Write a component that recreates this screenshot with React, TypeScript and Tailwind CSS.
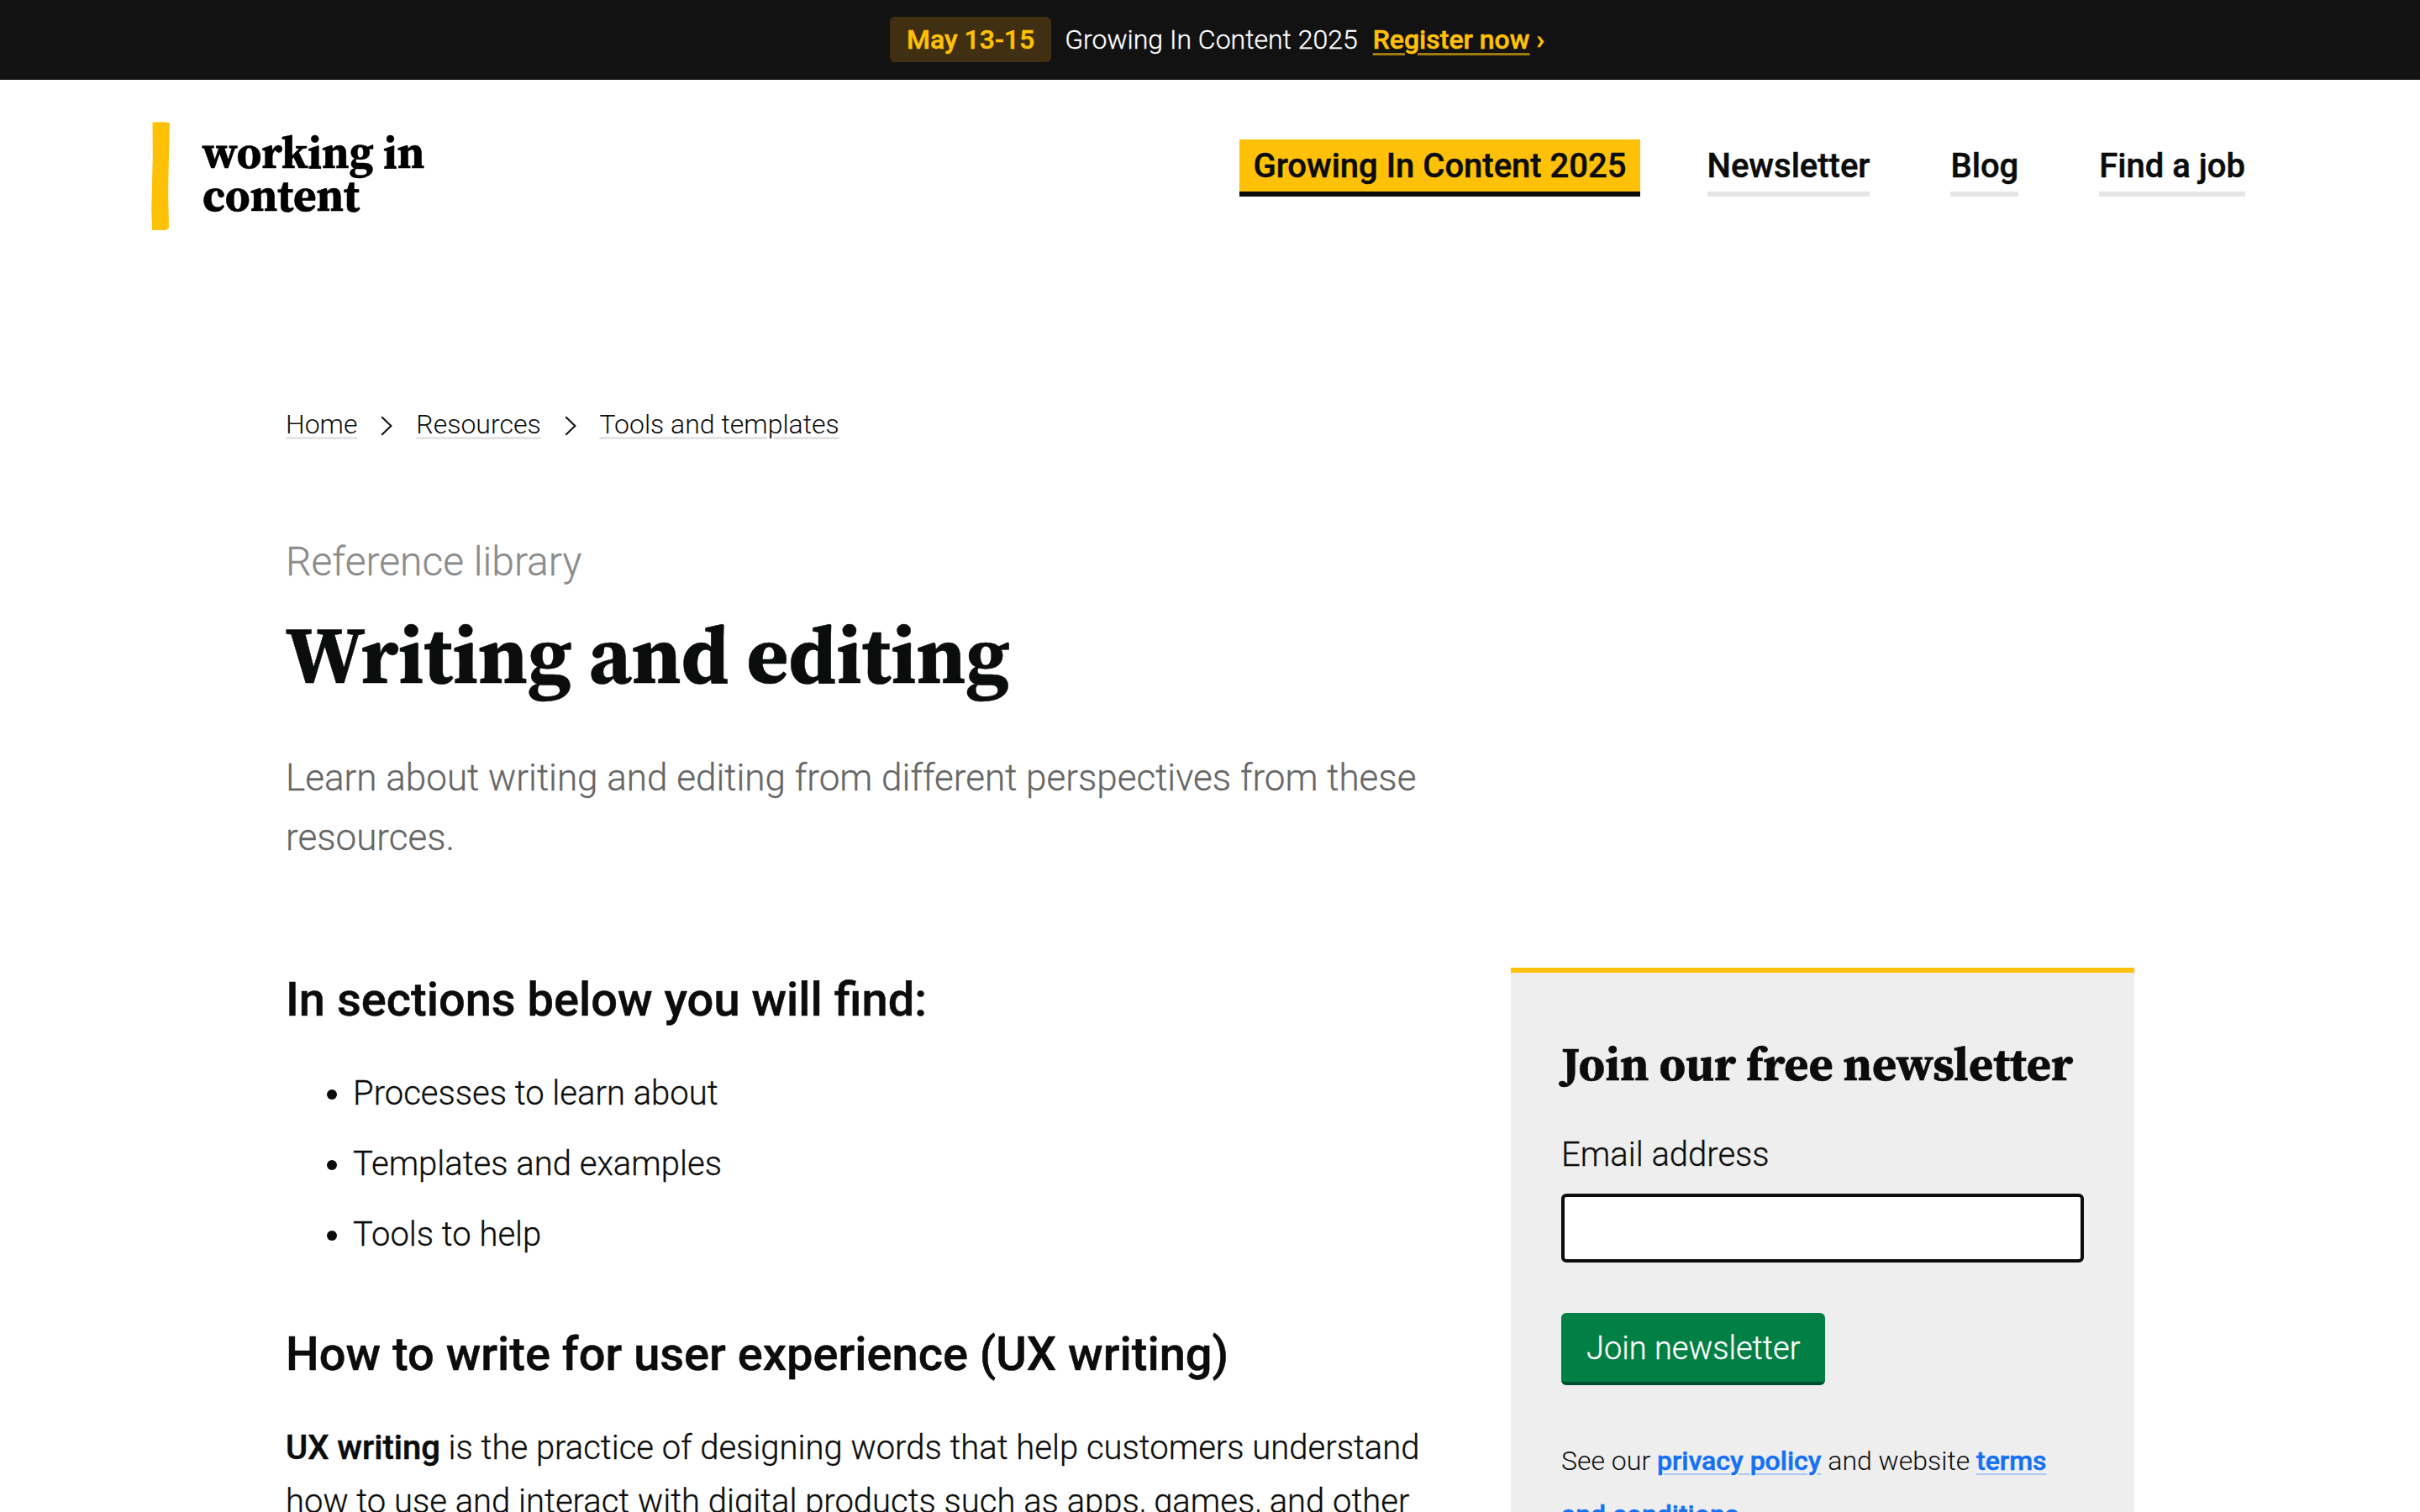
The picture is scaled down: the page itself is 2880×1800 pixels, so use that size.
import { Fragment } from "react";

interface NavItem {
  label: string;
  href: string;
}

const navItems: NavItem[] = [
  { label: "Newsletter", href: "#newsletter" },
  { label: "Blog", href: "#blog" },
  { label: "Find a job", href: "#jobs" },
];

const crumbs = ["Home", "Resources", "Tools and templates"];

const sections = ["Processes to learn about", "Templates and examples", "Tools to help"];

const Banner = () => (
  <div className="flex h-[95px] items-start justify-center bg-[#121212] pt-5 pl-[17px] text-[32px] leading-[54px] text-white">
    <span className="rounded-md bg-[#412f11] px-5 font-medium text-[#ffc107] [-webkit-text-stroke:0.5px]">May 13-15</span>
    <span className="ml-4 [-webkit-text-stroke:0.3px]">Growing In Content 2025</span>
    <a href="#register" className="ml-[18px] font-medium text-[#ffc107] [-webkit-text-stroke:0.5px]">
      <span className="underline decoration-[#ffc107]/60 decoration-[3px] underline-offset-[5px]">Register now</span> ›
    </a>
  </div>
);

const Logo = () => (
  <a href="#home" className="flex items-start gap-[38px]">
    <svg width="23" height="130" viewBox="0 0 23 130" className="text-[#ffc107]" fill="currentColor">
      <path d="M1.5 0.5L15 0.2L22 1.5L20.5 62L20.2 88L21 126.5L17.5 129L1 129L0.2 104L1.8 40Z" />
    </svg>
    <span className="pt-[11px] font-['Source_Serif_4','Liberation_Serif',serif] text-[53px] leading-[51px] font-bold text-black [-webkit-text-stroke:0.5px]">
      working in
      <br />
      content
    </span>
  </a>
);

const Header = () => (
  <header className="flex h-[330px] items-start justify-between pt-[50px] pr-[208px] pl-[180px]">
    <Logo />
    <nav className="mt-[21px] flex text-[40px] leading-[61px] font-medium [-webkit-text-stroke:0.5px]">
      <a href="#gic" className="mr-20 border-b-[6px] border-[#0b0c0c] bg-[#ffc107] px-4 pt-px">
        Growing In Content 2025
      </a>
      <div className="flex gap-24">
        {navItems.map((item) => (
          <a key={item.href} href={item.href} className="border-b-[6px] border-[#e5e5e5] pt-px">
            {item.label}
          </a>
        ))}
      </div>
    </nav>
  </header>
);

const Breadcrumbs = () => (
  <nav className="flex items-center text-[32px] leading-[52px]">
    {crumbs.map((crumb, i) => (
      <Fragment key={crumb}>
        {i > 0 && (
          <svg width="14" height="24" viewBox="0 0 14 24" className="mx-[27.9px] mt-1" fill="none" stroke="currentColor" strokeWidth="2">
            <path d="M1.2 1.2L12.4 12L1.2 22.8" />
          </svg>
        )}
        <a href="#crumb" className="underline decoration-[#e5e5e5] decoration-[3px] underline-offset-[4px]">
          {crumb}
        </a>
      </Fragment>
    ))}
  </nav>
);

const NewsletterCard = () => (
  <aside className="h-[700px] w-[742px] shrink-0 border-t-[6px] border-[#ffc107] bg-[#eeeeee] px-[60px] pt-[75px]">
    <h2 className="font-['Source_Serif_4','Liberation_Serif',serif] text-[56px] leading-[67px] font-bold whitespace-nowrap [-webkit-text-stroke:0.5px]">
      Join our free newsletter
    </h2>
    <label htmlFor="email" className="mt-[43px] block text-[40px] leading-[64px] [-webkit-text-stroke:0.3px]">
      Email address
    </label>
    <input id="email" type="email" className="mt-[14px] block h-[82px] w-full rounded-md border-4 border-[#0b0c0c] bg-white px-4" />
    <button className="mt-[60px] block h-[86px] rounded-md border-b-4 border-[#00502c] bg-[#008044] px-[30px] pt-0.5 text-[38px] leading-[80px] font-light text-white [-webkit-text-stroke:0.3px]">
      Join newsletter
    </button>
    <p className="mt-[58px] text-[32px] leading-[64px]">
      See our{" "}
      <a
        href="#privacy"
        className="font-medium text-[#1570f5] underline decoration-[#a9c8f3] decoration-2 underline-offset-[4px] [-webkit-text-stroke:0.5px]"
      >
        privacy policy
      </a>{" "}
      and website{" "}
      <a
        href="#terms"
        className="font-medium text-[#1570f5] underline decoration-[#a9c8f3] decoration-2 underline-offset-[4px] [-webkit-text-stroke:0.5px]"
      >
        terms and conditions
      </a>
      .
    </p>
  </aside>
);

export default function App() {
  return (
    <div className="h-[1800px] w-[2880px] overflow-hidden bg-white font-[Roboto,sans-serif] font-light text-[#0b0c0c]">
      <Banner />
      <Header />
      <main className="px-[340px] pt-[54px]">
        <Breadcrumbs />
        <div className="mt-[99px] w-[1400px] [-webkit-text-stroke:0.3px]">
          <p className="text-[48px] leading-[77px] text-[#8b8b8b]">Reference library</p>
          <h1 className="mt-5 font-['Source_Serif_4','Liberation_Serif',serif] text-[96px] leading-[106px] font-bold [-webkit-text-stroke:0.5px]">
            Writing and editing
          </h1>
          <p className="mt-[58px] text-[44px] leading-[71px] text-[#666666]">
            Learn about writing and editing from different perspectives from these resources.
          </p>
        </div>
        <div className="mt-[119px] flex items-start justify-between">
          <article className="w-[1360px] pt-[5px] text-[40px] leading-[64px] [-webkit-text-stroke:0.3px]">
            <h2 className="text-[56px] leading-[67px] font-medium [-webkit-text-stroke:0.5px]">In sections below you will find:</h2>
            <ul className="mt-[46px]">
              {sections.map((s) => (
                <li key={s} className="mb-5 flex items-center pl-[49px]">
                  <span className="mt-0.5 mr-[19px] size-3 rounded-full bg-[#0b0c0c]" />
                  {s}
                </li>
              ))}
            </ul>
            <h2 className="mt-[77px] text-[56px] leading-[67px] font-medium [-webkit-text-stroke:0.5px]">
              How to write for user experience (UX writing)
            </h2>
            <p className="mt-[46px]">
              <strong className="font-medium [-webkit-text-stroke:0.5px]">UX writing</strong> is the practice of designing words
              that help customers understand how to use and interact with digital products such as apps, games, and other
            </p>
          </article>
          <NewsletterCard />
        </div>
      </main>
    </div>
  );
}
